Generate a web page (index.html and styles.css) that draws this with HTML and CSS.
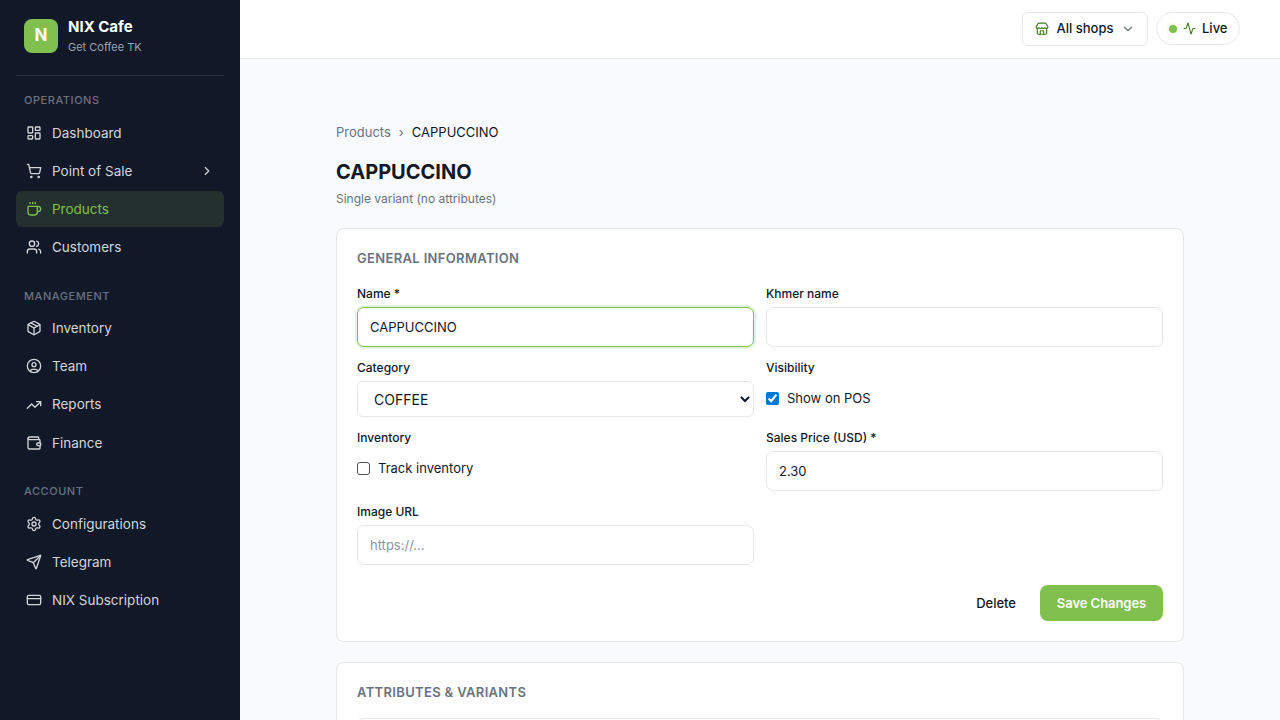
FILE: index.html
```html
<!DOCTYPE html>
<html lang="en">
<head>
    <meta charset="UTF-8">
    <meta name="viewport" content="width=device-width, initial-scale=1.0">
    <title>CAPPUCCINO - NIX Cafe</title>
    <link rel="stylesheet" href="styles.css">
</head>
<body>
    <div class="app">
        <aside class="sidebar">
            <div class="brand">
                <div class="brand-logo">N</div>
                <div class="brand-text">
                    <div class="brand-name">NIX Cafe</div>
                    <div class="brand-shop">Get Coffee TK</div>
                </div>
            </div>

            <nav class="nav">
                <div class="nav-section">
                    <div class="nav-title">Operations</div>
                    <a class="nav-item" href="#">
                        <svg class="icon" viewBox="0 0 24 24"><rect x="3" y="3" width="7" height="9" rx="1"/><rect x="14" y="3" width="7" height="5" rx="1"/><rect x="14" y="12" width="7" height="9" rx="1"/><rect x="3" y="16" width="7" height="5" rx="1"/></svg>
                        <span>Dashboard</span>
                    </a>
                    <a class="nav-item" href="#">
                        <svg class="icon" viewBox="0 0 24 24"><circle cx="8" cy="21" r="1"/><circle cx="19" cy="21" r="1"/><path d="M2.05 2.05h2l2.66 12.42a2 2 0 0 0 2 1.58h9.78a2 2 0 0 0 1.95-1.57l1.65-7.43H5.12"/></svg>
                        <span>Point of Sale</span>
                        <svg class="icon nav-arrow" viewBox="0 0 24 24"><path d="m9 18 6-6-6-6"/></svg>
                    </a>
                    <a class="nav-item active" href="#">
                        <svg class="icon" viewBox="0 0 24 24"><path d="M10 2v2M14 2v2M6 2v2"/><path d="M16 8a1 1 0 0 1 1 1v8a4 4 0 0 1-4 4H7a4 4 0 0 1-4-4V9a1 1 0 0 1 1-1h14a4 4 0 1 1 0 8h-1"/></svg>
                        <span>Products</span>
                    </a>
                    <a class="nav-item" href="#">
                        <svg class="icon" viewBox="0 0 24 24"><path d="M16 21v-2a4 4 0 0 0-4-4H6a4 4 0 0 0-4 4v2"/><circle cx="9" cy="7" r="4"/><path d="M16 3.128a4 4 0 0 1 0 7.744"/><path d="M22 21v-2a4 4 0 0 0-3-3.87"/></svg>
                        <span>Customers</span>
                    </a>
                </div>

                <div class="nav-section">
                    <div class="nav-title">Management</div>
                    <a class="nav-item" href="#">
                        <svg class="icon" viewBox="0 0 24 24"><path d="M11 21.73a2 2 0 0 0 2 0l7-4A2 2 0 0 0 21 16V8a2 2 0 0 0-1-1.73l-7-4a2 2 0 0 0-2 0l-7 4A2 2 0 0 0 3 8v8a2 2 0 0 0 1 1.73z"/><path d="M12 22V12"/><path d="M3.29 7 12 12l8.71-5"/><path d="m7.5 4.27 9 5.15"/></svg>
                        <span>Inventory</span>
                    </a>
                    <a class="nav-item" href="#">
                        <svg class="icon" viewBox="0 0 24 24"><circle cx="12" cy="12" r="10"/><circle cx="12" cy="10" r="3"/><path d="M7 20.662V19a2 2 0 0 1 2-2h6a2 2 0 0 1 2 2v1.662"/></svg>
                        <span>Team</span>
                    </a>
                    <a class="nav-item" href="#">
                        <svg class="icon" viewBox="0 0 24 24"><path d="M16 7h6v6"/><path d="m22 7-8.5 8.5-5-5L2 17"/></svg>
                        <span>Reports</span>
                    </a>
                    <a class="nav-item" href="#">
                        <svg class="icon" viewBox="0 0 24 24"><path d="M19 7V4a1 1 0 0 0-1-1H5a2 2 0 0 0 0 4h15a1 1 0 0 1 1 1v4h-3a2 2 0 0 0 0 4h3a1 1 0 0 0 1-1v-2a1 1 0 0 0-1-1"/><path d="M3 5v14a2 2 0 0 0 2 2h15a1 1 0 0 0 1-1v-4"/></svg>
                        <span>Finance</span>
                    </a>
                </div>

                <div class="nav-section">
                    <div class="nav-title">Account</div>
                    <a class="nav-item" href="#">
                        <svg class="icon" viewBox="0 0 24 24"><path d="M9.671 4.136a2.34 2.34 0 0 1 4.659 0 2.34 2.34 0 0 0 3.319 1.915 2.34 2.34 0 0 1 2.33 4.033 2.34 2.34 0 0 0 0 3.831 2.34 2.34 0 0 1-2.33 4.033 2.34 2.34 0 0 0-3.319 1.915 2.34 2.34 0 0 1-4.659 0 2.34 2.34 0 0 0-3.32-1.915 2.34 2.34 0 0 1-2.33-4.033 2.34 2.34 0 0 0 0-3.831A2.34 2.34 0 0 1 6.35 6.051a2.34 2.34 0 0 0 3.319-1.915"/><circle cx="12" cy="12" r="3"/></svg>
                        <span>Configurations</span>
                    </a>
                    <a class="nav-item" href="#">
                        <svg class="icon" viewBox="0 0 24 24"><path d="M14.536 21.686a.5.5 0 0 0 .937-.024l6.5-19a.496.496 0 0 0-.635-.635l-19 6.5a.5.5 0 0 0-.024.937l7.93 3.18a2 2 0 0 1 1.112 1.11z"/><path d="m21.854 2.147-10.94 10.939"/></svg>
                        <span>Telegram</span>
                    </a>
                    <a class="nav-item" href="#">
                        <svg class="icon" viewBox="0 0 24 24"><rect x="2" y="5" width="20" height="14" rx="2"/><path d="M2 10h20"/></svg>
                        <span>NIX Subscription</span>
                    </a>
                </div>
            </nav>
        </aside>

        <div class="main">
            <header class="topbar">
                <button type="button" class="shop-select">
                    <svg class="icon icon-green" viewBox="0 0 24 24"><path d="M15 21v-5a1 1 0 0 0-1-1h-4a1 1 0 0 0-1 1v5"/><path d="M17.774 10.31a1.12 1.12 0 0 0-1.549 0 2.5 2.5 0 0 1-3.451 0 1.12 1.12 0 0 0-1.548 0 2.5 2.5 0 0 1-3.452 0 1.12 1.12 0 0 0-1.549 0 2.5 2.5 0 0 1-3.77-3.248l2.889-4.184A2 2 0 0 1 7 2h10a2 2 0 0 1 1.653.873l2.895 4.192a2.5 2.5 0 0 1-3.774 3.244"/><path d="M4 10.95V19a2 2 0 0 0 2 2h12a2 2 0 0 0 2-2v-8.05"/></svg>
                    <span class="shop-name">All shops</span>
                    <svg class="icon icon-caret" viewBox="0 0 24 24"><path d="m6 9 6 6 6-6"/></svg>
                </button>
                <div class="live">
                    <span class="live-dot"></span>
                    <svg class="icon icon-pulse" viewBox="0 0 24 24"><path d="M22 12h-2.48a2 2 0 0 0-1.93 1.46l-2.35 8.36a.25.25 0 0 1-.48 0L9.24 2.18a.25.25 0 0 0-.48 0l-2.35 8.36A2 2 0 0 1 4.49 12H2"/></svg>
                    <span class="live-text">Live</span>
                </div>
            </header>

            <main class="content">
                <div class="breadcrumb">
                    <a href="#">Products</a>
                    <span class="sep">›</span>
                    <span class="current">CAPPUCCINO</span>
                </div>
                <h1>CAPPUCCINO</h1>
                <p class="subtitle">Single variant (no attributes)</p>

                <section class="card">
                    <h2>General information</h2>
                    <form id="product-form">
                        <div class="form-grid">
                            <div class="field">
                                <label for="name">Name *</label>
                                <input class="input focused" type="text" id="name" name="name" value="CAPPUCCINO" required>
                            </div>
                            <div class="field">
                                <label for="khmer-name">Khmer name</label>
                                <input class="input" type="text" id="khmer-name" name="khmerName">
                            </div>
                            <div class="field">
                                <label for="category">Category</label>
                                <select class="select" id="category" name="category">
                                    <option>COFFEE</option>
                                </select>
                            </div>
                            <div class="field">
                                <label for="show-pos">Visibility</label>
                                <div class="check">
                                    <input type="checkbox" id="show-pos" name="showPos" checked>
                                    <span>Show on POS</span>
                                </div>
                            </div>
                            <div class="field">
                                <label for="track">Inventory</label>
                                <div class="check">
                                    <input type="checkbox" id="track" name="track">
                                    <span>Track inventory</span>
                                </div>
                            </div>
                            <div class="field">
                                <label for="price">Sales Price (USD) *</label>
                                <input class="input" type="text" id="price" name="price" value="2.30" required>
                            </div>
                            <div class="field">
                                <label for="image-url">Image URL</label>
                                <input class="input" type="text" id="image-url" name="imageUrl" placeholder="https://...">
                            </div>
                        </div>
                        <div class="actions">
                            <button type="button" class="btn">Delete</button>
                            <button type="submit" class="btn btn-primary">Save Changes</button>
                        </div>
                    </form>
                </section>

                <section class="card">
                    <h2>Attributes &amp; variants</h2>
                    <div class="variants"></div>
                </section>
            </main>
        </div>
    </div>
</body>
</html>
```
FILE: styles.css
```css
* {
    box-sizing: border-box;
}

body {
    font-family: Inter, sans-serif;
    font-size: 14px;
    line-height: 1.45;
    color: #111827;
    background-color: #f9fafc;
    margin: 0;
}

a {
    color: inherit;
    text-decoration: none;
}

.app {
    display: flex;
    height: 100vh;
    overflow: hidden;
}

.icon {
    width: 16px;
    height: 16px;
    flex-shrink: 0;
    fill: none;
    stroke: currentColor;
    stroke-width: 2;
    stroke-linecap: round;
    stroke-linejoin: round;
}

/* Sidebar */
.sidebar {
    width: 240px;
    flex-shrink: 0;
    padding: 16px;
    background-color: #111827;
    color: #d1d5db;
}

.brand {
    display: flex;
    align-items: center;
    gap: 10px;
    height: 60px;
    padding: 0 8px 20px;
    border-bottom: 1px solid #293040;
}

.brand-logo {
    width: 34px;
    height: 34px;
    border-radius: 8px;
    background-color: #7fc04e;
    color: #ffffff;
    font-size: 17px;
    font-weight: 700;
    line-height: 32px;
    text-align: center;
}

.brand-name {
    color: #ffffff;
    font-size: 15px;
    font-weight: 700;
    line-height: 22px;
}

.brand-shop {
    color: #9ca3af;
    font-size: 11px;
    line-height: 18px;
}

.nav {
    padding-top: 16.3px;
}

.nav-section {
    display: flex;
    flex-direction: column;
    gap: 2px;
    margin-bottom: 22.4px;
}

.nav-title {
    height: 20px;
    margin-bottom: 0.3px;
    padding: 0 8px;
    color: #6b7280;
    font-size: 11px;
    font-weight: 500;
    line-height: 16px;
    letter-spacing: 0.55px;
    text-transform: uppercase;
}

.nav-item {
    display: flex;
    align-items: center;
    gap: 10px;
    height: 36.2px;
    padding: 0 10px;
    border-radius: 6px;
    font-size: 13.5px;
}

.nav-item span {
    padding-top: 1.5px;
}

.nav-item.active {
    background-color: #23302d;
    color: #7fc04e;
}

.nav-arrow {
    width: 14px;
    height: 14px;
    margin-left: auto;
}

/* Top bar */
.main {
    flex: 1;
    min-width: 0;
}

.topbar {
    display: flex;
    justify-content: flex-end;
    align-items: center;
    gap: 8px;
    height: 59px;
    padding: 0 40px 1px;
    background-color: #ffffff;
    border-bottom: 1px solid #e5e7eb;
}

.shop-select {
    display: flex;
    align-items: center;
    gap: 7.5px;
    width: 126px;
    height: 34px;
    padding: 0 12px;
    border: 1px solid #e5e7eb;
    border-radius: 6px;
    background-color: #ffffff;
    color: #111827;
    font-family: inherit;
    font-size: 13px;
    font-weight: 500;
}

.shop-select .icon {
    width: 14px;
    height: 14px;
}

.shop-name {
    margin-bottom: 1px;
}

.icon-green,
.icon-pulse {
    color: #3f7a1c;
}

.shop-select .icon-caret {
    color: #6b7280;
}

.live {
    display: flex;
    align-items: center;
    width: 84px;
    height: 33px;
    padding: 0 12px;
    border: 1px solid #e5e7eb;
    border-radius: 999px;
    font-size: 13px;
    font-weight: 500;
}

.live-dot {
    width: 8px;
    height: 8px;
    flex-shrink: 0;
    margin-right: 6px;
    border-radius: 50%;
    background-color: #7fc04e;
    box-shadow: 0 0 0 3px #f8fcf5;
}

.icon-pulse {
    width: 13px;
    height: 13px;
}

.live-text {
    margin: 0 0 1px 6px;
}

/* Product page */
.content {
    width: 848px;
    margin: 0 auto;
    padding-top: 64px;
}

.breadcrumb {
    display: flex;
    gap: 8px;
    height: 19px;
    font-size: 13px;
    line-height: 19px;
    color: #6b7280;
}

.breadcrumb .current {
    color: #111827;
}

h1 {
    margin: 16px 0 0;
    font-size: 20px;
    font-weight: 700;
    line-height: 29px;
}

.subtitle {
    margin: 3px 0 21px;
    color: #6b7280;
    font-size: 12px;
    line-height: 17px;
}

.card {
    margin-bottom: 20px;
    padding: 20px;
    border: 1px solid #e5e7eb;
    border-radius: 8px;
    background-color: #ffffff;
}

h2 {
    margin: 0 0 16px;
    color: #6b7280;
    font-size: 13px;
    font-weight: 600;
    line-height: 19px;
    letter-spacing: 0.34px;
    text-transform: uppercase;
}

.form-grid {
    display: grid;
    grid-template-columns: 1fr 1fr;
    gap: 12px;
    padding-top: 1px;
}

.field label {
    display: block;
    margin-bottom: 5px;
    font-size: 12px;
    font-weight: 500;
    line-height: 17px;
}

.input,
.select {
    display: block;
    width: 100%;
    border: 1px solid #e5e7eb;
    border-radius: 6px;
    background-color: #ffffff;
    color: #111827;
    font-family: inherit;
}

.input {
    height: 40px;
    padding: 0 12px;
    border-radius: 7px;
    font-size: 13px;
}

.input::placeholder {
    color: #8e959f;
}

.input:focus,
.input.focused {
    outline: none;
    border-color: #7fc04e;
    box-shadow: 0 0 0 2px #e5f2dc;
}

.select {
    height: 36px;
    padding: 0 12px;
    font-size: 14px;
}

.check {
    display: flex;
    align-items: center;
    gap: 8px;
    height: 35px;
    font-size: 13px;
}

.check input {
    width: 13px;
    height: 13px;
    margin: 0;
    accent-color: #0078d7;
}

.check input:not(:checked) {
    appearance: none;
    border: 1px solid #505050;
    border-radius: 3px;
}

.actions {
    display: flex;
    justify-content: flex-end;
    gap: 8px;
    margin-top: 20px;
}

.btn {
    height: 36px;
    padding: 0 16px 1px;
    border: none;
    border-radius: 8px;
    background-color: transparent;
    color: #111827;
    font-family: inherit;
    font-size: 13px;
    font-weight: 500;
}

.btn-primary {
    width: 123px;
    padding: 0 0 1px;
    background-color: #7fc04e;
    color: #ffffff;
    font-weight: 600;
    letter-spacing: -0.05px;
}

.variants {
    height: 120px;
    border: 1px solid #e5e7eb;
    border-radius: 6px;
}
```
